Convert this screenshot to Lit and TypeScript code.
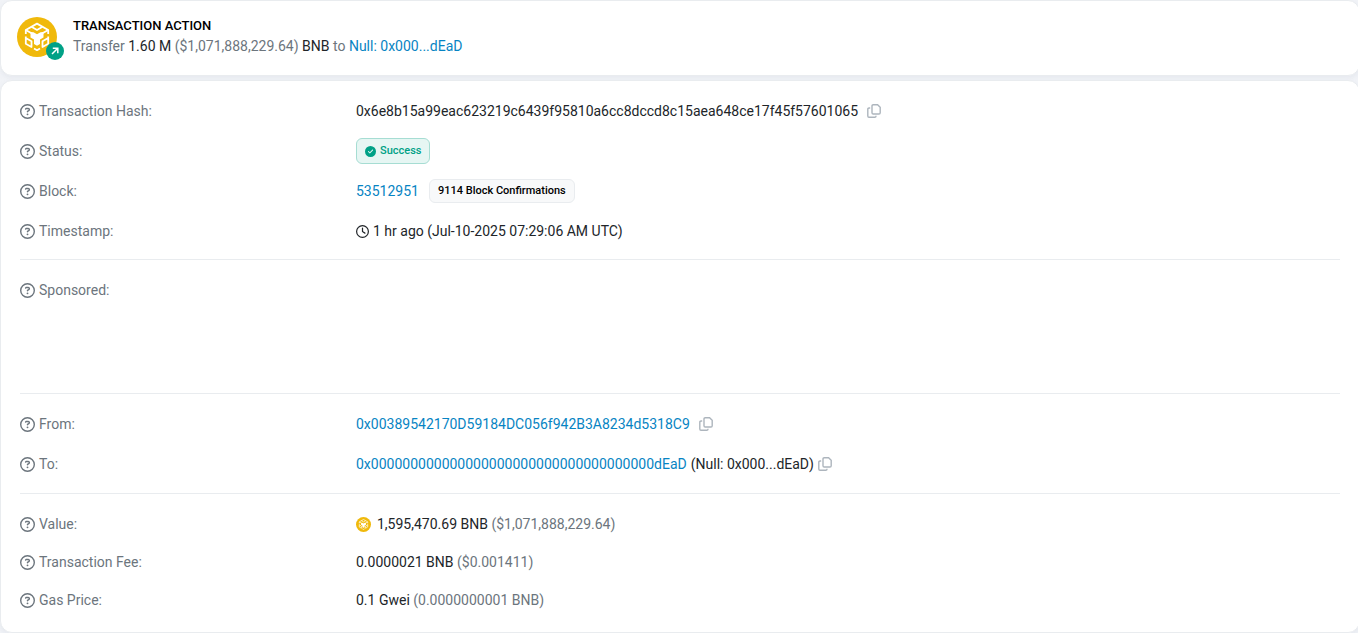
import { LitElement, html, css, svg } from "lit";
import { customElement } from "lit/decorators.js";

const helpIcon = html`<svg class="icon help" viewBox="0 0 512 512" aria-hidden="true"><path d="M464 256A208 208 0 1 0 48 256a208 208 0 1 0 416 0zM0 256a256 256 0 1 1 512 0A256 256 0 1 1 0 256zm169.8-90.7c7.9-22.3 29.1-37.3 52.8-37.3h58.3c34.9 0 63.1 28.3 63.1 63.1c0 22.6-12.1 43.5-31.7 54.8L280 264.4c-.2 13-10.9 23.6-24 23.6c-13.3 0-24-10.7-24-24V250.5c0-8.6 4.6-16.5 12.1-20.8l44.3-25.4c4.7-2.7 7.6-7.7 7.6-13.1c0-8.4-6.8-15.1-15.1-15.1H222.6c-3.4 0-6.4 2.1-7.5 5.3l-.4 1.2c-4.4 12.5-18.2 19-30.6 14.6s-19-18.2-14.6-30.6l.4-1.2zM224 352a32 32 0 1 1 64 0 32 32 0 1 1 -64 0z"/></svg>`;

const clockIcon = html`<svg class="icon clock" viewBox="0 0 512 512" aria-hidden="true"><path d="M464 256A208 208 0 1 1 48 256a208 208 0 1 1 416 0zM0 256a256 256 0 1 0 512 0A256 256 0 1 0 0 256zM232 120V256c0 8 4 15.5 10.7 20l96 64c11 7.4 25.9 4.4 33.3-6.7s4.4-25.9-6.7-33.3L280 243.200V120c0-13.3-10.7-24-24-24s-24 10.7-24 24z"/></svg>`;

const checkIcon = html`<svg class="icon check" viewBox="0 0 512 512" aria-hidden="true"><path d="M256 512A256 256 0 1 0 256 0a256 256 0 1 0 0 512zM369 209L241 337c-9.4 9.4-24.6 9.4-33.9 0l-64-64c-9.4-9.4-9.4-24.6 0-33.9s24.6-9.4 33.9 0l47 47L335 175c9.4-9.4 24.6-9.4 33.9 0s9.4 24.6 0 33.9z"/></svg>`;

const cube = svg`
  <circle cx="20" cy="20" r="20" fill="#f0b90b"/>
  <g fill="none" stroke="#fff" stroke-width="1.800" stroke-linejoin="round">
    <path d="M8.800 17V13L20 6.600L31.200 13V17"/>
    <path d="M14.500 9.800L20 13L25.500 9.800"/>
    <path d="M8.800 13L14.500 16.300M31.200 13L25.500 16.300"/>
    <path d="M8.800 19.500V26.700L14.500 30V24.300L8.800 21"/>
    <path d="M31.200 19.500V26.700L25.500 30V24.300L31.200 21"/>
    <path d="M17 31.500L20 33.200L23 31.500"/>
  </g>
  <path d="M13.500 15L16.500 15.200L20 17.200L23.500 15.200L26.500 15V20.500L23 22.500V27L20 28.800L17 27V22.500L13.500 20.500Z" fill="#fff"/>`;

const logo = (cls: string) => html`<svg class=${cls} viewBox="0 0 40 40" aria-hidden="true">${cube}</svg>`;

const copyButton = (label: string) => html`<button class="copy" type="button" aria-label=${label}>
  <svg class="copy-icon" viewBox="0 0 14 14" aria-hidden="true"><g fill="none" stroke="currentColor" stroke-width="1.400"><path d="M6.200 .7h4.400l2.600 2.500v5.600a1.200 1.200 0 0 1-1.200 1.200H6.200A1.200 1.200 0 0 1 5 8.800V1.900A1.200 1.200 0 0 1 6.200 .7z"/><path d="M3.200 4H2A1.200 1.200 0 0 0 .8 5.200v6.900A1.200 1.200 0 0 0 2 13.300h5.800A1.200 1.200 0 0 0 9 12.100v-.3"/></g></svg>
</button>`;

const row = (label: string, value: unknown = "") => html`<div class="row">
  <dt class="label">${helpIcon}<span>${label}</span></dt>
  <dd class="value">${value}</dd>
</div>`;

@customElement("app-root")
export class AppRoot extends LitElement {
  static styles = css`
    :host {
      display: flex;
      flex-direction: column;
      gap: 4px;
      box-sizing: border-box;
      min-height: 100vh;
      overflow: hidden;
      background: #f1f3f7;
      color: #212529;
      font: 14px/20px Roboto, "Liberation Sans", sans-serif;
    }
    .card {
      margin-right: -2px;
      background: #fff;
      border: 1px solid #e9ecef;
      border-radius: 12px;
      box-shadow: 0 2px 4px rgba(189, 197, 209, 0.2);
    }
    .action {
      display: flex;
      gap: 9px;
      padding: 16px 16px 10px;
    }
    .token {
      position: relative;
      width: 47px;
      height: 48px;
    }
    .token-logo { display: block; width: 40px; height: 40px; }
    .direction {
      position: absolute;
      right: 0;
      bottom: 5px;
      width: 18px;
      height: 18px;
    }
    .title {
      margin: 0;
      color: #000;
      font-size: 13px;
      font-weight: 500;
      line-height: 18px;
    }
    .summary { margin: 0; color: #6c757d; line-height: 22px; }
    .strong { color: #212529; }
    .muted { color: #6c757d; }
    a { color: #0784c3; text-decoration: none; }
    .details { padding: 10px 19px 13px; }
    .group {
      margin: 0 0 10px;
      padding-bottom: 8px;
      border-bottom: 1px solid #e9ecef;
    }
    .sponsor { min-height: 115px; }
    .addresses { padding-bottom: 9px; }
    .compact { margin: 0; padding: 1px 0 0; border: 0; }
    .row {
      display: grid;
      grid-template-columns: 3fr 9fr;
      column-gap: 8px;
      align-items: center;
      min-height: 40px;
    }
    .compact .row { min-height: 38px; }
    .label {
      display: flex;
      align-items: center;
      gap: 4px;
      color: #6c757d;
    }
    .value {
      display: flex;
      flex-wrap: wrap;
      align-items: center;
      gap: 4px;
      margin: 0;
      overflow-wrap: anywhere;
    }
    .icon { fill: currentColor; flex: none; }
    .help { width: 15px; height: 15px; }
    .clock { width: 13px; height: 13px; }
    .check { width: 11px; height: 11px; }
    .coin { width: 15px; height: 15px; margin-right: 2px; }
    .copy {
      display: flex;
      padding: 0;
      border: 0;
      background: none;
      color: #adb5bd;
      cursor: pointer;
    }
    .copy-icon { width: 14px; height: 14px; }
    .spaced { margin-right: 5px; }
    .badge {
      display: inline-flex;
      align-items: center;
      gap: 4px;
      box-sizing: border-box;
      height: 26px;
      padding: 0 8px;
      border: 1px solid #a6ddd3;
      border-radius: 6px;
      background: #e6f6f3;
      color: #00a186;
      font-size: 11px;
      font-weight: 500;
      line-height: 16px;
    }
    .neutral {
      height: 24px;
      margin-left: 6px;
      border-color: #e9ecef;
      background: #f8f9fa;
      color: #000;
    }
  `;

  render() {
    return html`
      <section class="card action">
        <div class="token">
          ${logo("token-logo")}
          <svg class="direction" viewBox="0 0 18 18" aria-hidden="true"><circle cx="9" cy="9" r="9" fill="#00a186"/><path d="M6 12l5.500-5.500M6.800 6.300h5v5" fill="none" stroke="#fff" stroke-width="1.500"/></svg>
        </div>
        <div>
          <h1 class="title">TRANSACTION ACTION</h1>
          <p class="summary">Transfer <span class="strong">1.60 M</span> ($1,071,888,229.64) <span class="strong">BNB</span> to <a href="#null">Null: 0x000...dEaD</a></p>
        </div>
      </section>
      <section class="card details">
        <dl class="group">
          ${row("Transaction Hash:", html`<span class="spaced">0x6e8b15a99eac623219c6439f95810a6cc8dccd8c15aea648ce17f45f57601065</span>${copyButton("Copy transaction hash")}`)}
          ${row("Status:", html`<span class="badge">${checkIcon}Success</span>`)}
          ${row("Block:", html`<a href="#block">53512951</a><span class="badge neutral">9114 Block Confirmations</span>`)}
          ${row("Timestamp:", html`${clockIcon}<span>1 hr ago (Jul-10-2025 07:29:06 AM UTC)</span>`)}
        </dl>
        <dl class="group"><div class="sponsor">${row("Sponsored:")}</div></dl>
        <dl class="group addresses">
          ${row("From:", html`<a class="spaced" href="#from">0x00389542170D59184DC056f942B3A8234d5318C9</a>${copyButton("Copy sender address")}`)}
          ${row("To:", html`<a href="#to">0x000000000000000000000000000000000000dEaD</a><span>(Null: 0x000...dEaD)</span>${copyButton("Copy recipient address")}`)}
        </dl>
        <dl class="group compact">
          ${row("Value:", html`${logo("coin")}<span>1,595,470.69 BNB <span class="muted">($1,071,888,229.64)</span></span>`)}
          ${row("Transaction Fee:", html`<span>0.0000021 BNB <span class="muted">($0.001411)</span></span>`)}
          ${row("Gas Price:", html`<span>0.1 Gwei <span class="muted">(0.0000000001 BNB)</span></span>`)}
        </dl>
      </section>`;
  }
}
